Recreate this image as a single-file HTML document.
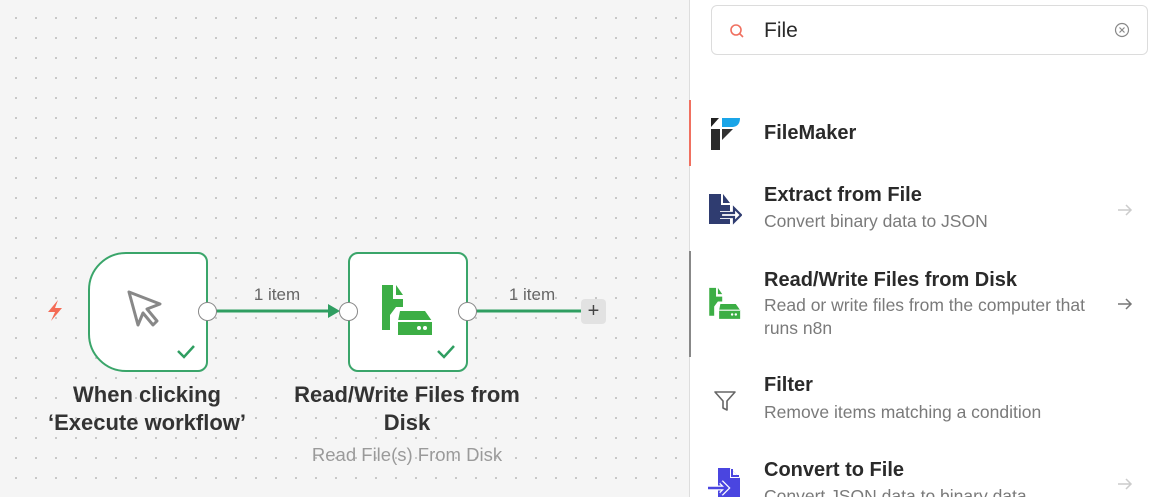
<!DOCTYPE html>
<html><head><style>
*{margin:0;padding:0;box-sizing:border-box}
html,body{width:1161px;height:497px;overflow:hidden}
body{position:relative;font-family:"Liberation Sans",sans-serif;background:#f5f5f5}
.canvas{position:absolute;left:0;top:0;width:689px;height:497px;background-color:#f5f5f5;background-image:radial-gradient(circle,#c4c4c4 1px,transparent 1.2px);background-size:20px 20px;background-position:6px 8px}
.node{position:absolute;top:252px;width:120px;height:120px;background:#fff;border:2px solid #3aa56a;border-radius:10px}
.h{position:absolute;width:19px;height:19px;border-radius:50%;background:#fff;border:1.5px solid #888;top:302px}
.lbl{position:absolute;text-align:center;font-size:22px;font-weight:600;color:#333;line-height:28px;white-space:nowrap}
.panel{position:absolute;left:689px;top:0;width:472px;height:497px;background:#fff;border-left:1px solid #ddd}
.item{position:absolute;left:764px;white-space:nowrap}
.t{font-size:20px;font-weight:600;color:#2a2a2a}
.s{font-size:17.5px;color:#7a7a7a;line-height:23px}
.arr{position:absolute;left:1117px}
</style></head><body>
<div class="canvas"></div>
<svg style="position:absolute;left:0;top:0" width="689" height="497">
<line x1="216" y1="311" x2="332" y2="311" stroke="#2f9e61" stroke-width="3"/>
<polygon points="328,304 340,311 328,318" fill="#2f9e61"/>
<line x1="476" y1="311" x2="582" y2="311" stroke="#2f9e61" stroke-width="3"/>
<path d="M58 300 L48 312 L55 312 L51 321 L62 308 L55 308 Z" fill="#f46b55"/>
<text x="277" y="300" text-anchor="middle" font-size="17" fill="#666" font-family="Liberation Sans">1 item</text>
<text x="532" y="300" text-anchor="middle" font-size="17" fill="#666" font-family="Liberation Sans">1 item</text>
</svg>
<div class="node" style="left:88px;border-radius:38px 10px 10px 38px"></div>
<div class="node" style="left:348px"></div>
<svg style="position:absolute;left:120px;top:285px" width="52" height="52" viewBox="0 0 52 52"><path d="M9 7 L40 19 L27 24 L37 36 L33 40 L23 28 L18 40 Z" fill="none" stroke="#888" stroke-width="3" stroke-linejoin="round"/></svg>
<svg style="position:absolute;left:176px;top:343px" width="20" height="16"><path d="M2 8 L8 14 L18 3" fill="none" stroke="#2f9e61" stroke-width="2.5"/></svg>
<svg style="position:absolute;left:436px;top:343px" width="20" height="16"><path d="M2 8 L8 14 L18 3" fill="none" stroke="#2f9e61" stroke-width="2.5"/></svg>
<svg style="position:absolute;left:380px;top:285px" width="55" height="52" viewBox="0 0 55 52"><path d="M2 0 H13 V14 H23 V22 H16 L10 30 V45 H2 Z" fill="#3cae45"/><path d="M16 0 L23 10 H16 Z" fill="#3cae45"/><path d="M20 26 H45 L52 36 V50 H18 V36 Z" fill="#3cae45"/><line x1="18" y1="36" x2="52" y2="36" stroke="#fff" stroke-width="2"/><circle cx="39" cy="43" r="2" fill="#fff"/><circle cx="45" cy="43" r="2" fill="#fff"/></svg>
<div class="h" style="left:198px"></div>
<div class="h" style="left:339px"></div>
<div class="h" style="left:458px"></div>
<div style="position:absolute;left:581px;top:299px;width:25px;height:25px;background:#e2e2e2;border-radius:4px;text-align:center;font-size:20px;line-height:24px;color:#444">+</div>
<div class="lbl" style="left:27px;width:240px;top:381px">When clicking<br>‘Execute workflow’</div>
<div class="lbl" style="left:287px;width:240px;top:381px">Read/Write Files from<br>Disk</div>
<div style="position:absolute;left:257px;width:300px;top:444px;text-align:center;font-size:18.5px;color:#9a9a9a">Read File(s) From Disk</div>
<div class="panel"></div>
<div style="position:absolute;left:711px;top:5px;width:437px;height:50px;border:1px solid #dcdcdc;border-radius:6px;background:#fff"></div>
<svg style="position:absolute;left:729px;top:23px" width="16" height="16"><circle cx="7" cy="7" r="5" fill="none" stroke="#f07060" stroke-width="1.6"/><line x1="10.5" y1="10.5" x2="14" y2="14" stroke="#f07060" stroke-width="1.6"/></svg>
<div style="position:absolute;left:764px;top:19px;font-size:21px;color:#2a2a2a">File</div>
<svg style="position:absolute;left:1114px;top:22px" width="16" height="16"><circle cx="8" cy="8" r="6.5" fill="none" stroke="#888" stroke-width="1.2"/><path d="M5.5 5.5 L10.5 10.5 M10.5 5.5 L5.5 10.5" stroke="#888" stroke-width="1.2"/></svg>
<div style="position:absolute;left:689px;top:100px;width:2px;height:66px;background:#f07060"></div>
<div style="position:absolute;left:689px;top:251px;width:2px;height:106px;background:#888"></div>
<svg style="position:absolute;left:709px;top:116px" width="32" height="34" viewBox="0 0 32 34"><path d="M2 2 H10 L2 11 Z" fill="#222"/><path d="M13 2 H31 Q31 10 24 11 H13 Z" fill="#1aa5e8"/><path d="M2 13 H11 V34 H2 Z" fill="#2a2a2a"/><path d="M13 13 H24 L13 24 Z" fill="#333"/></svg>
<div class="item t" style="top:122px">FileMaker</div>
<svg style="position:absolute;left:708px;top:193px" width="34" height="32" viewBox="0 0 34 32"><path d="M1 1 H13 V12 H22 V18 H12 V26 H22 V31 H1 Z" fill="#2f3c70"/><path d="M15 1 L22 10 H15 Z" fill="#2f3c70"/><path d="M13 20 H26 V15 L33 22 L26 29 V24 H13 Z" fill="none" stroke="#2f3c70" stroke-width="2.2"/></svg>
<div class="item t" style="top:184px">Extract from File</div>
<div class="item s" style="top:210px">Convert binary data to JSON</div>
<svg class="arr" style="top:202px" width="16" height="16"><path d="M1 8 H14 M9 3 L14 8 L9 13" fill="none" stroke="#ccc" stroke-width="1.5"/></svg>
<svg style="position:absolute;left:708px;top:287px" width="34" height="34" viewBox="0 0 55 52"><path d="M2 0 H13 V14 H23 V22 H16 L10 30 V45 H2 Z" fill="#3cae45"/><path d="M16 0 L23 10 H16 Z" fill="#3cae45"/><path d="M20 26 H45 L52 36 V50 H18 V36 Z" fill="#3cae45"/><line x1="18" y1="36" x2="52" y2="36" stroke="#fff" stroke-width="2"/><circle cx="39" cy="43" r="2" fill="#fff"/><circle cx="45" cy="43" r="2" fill="#fff"/></svg>
<div class="item t" style="top:269px">Read/Write Files from Disk</div>
<div class="item s" style="top:294px">Read or write files from the computer that<br>runs n8n</div>
<svg class="arr" style="top:296px" width="16" height="16"><path d="M1 8 H14 M9 3 L14 8 L9 13" fill="none" stroke="#777" stroke-width="1.5"/></svg>
<svg style="position:absolute;left:713px;top:389px" width="24" height="24"><path d="M2 3 H22 L14 12 V21 L10 19 V12 Z" fill="none" stroke="#666" stroke-width="1.6" stroke-linejoin="round"/></svg>
<div class="item t" style="top:374px">Filter</div>
<div class="item s" style="top:401px">Remove items matching a condition</div>
<svg style="position:absolute;left:708px;top:468px" width="34" height="30" viewBox="0 0 34 30"><path d="M10 0 H22 L32 10 V30 H10 Z" fill="#4a45e0"/><path d="M22 0 V10 H32" fill="#fff"/><path d="M24 1 V8 H31" fill="none" stroke="#4a45e0" stroke-width="2"/><path d="M0 20 H18 M13 14 L19 20 L13 26" fill="none" stroke="#fff" stroke-width="5"/><path d="M0 20 H18 M13 14 L19 20 L13 26" fill="none" stroke="#4a45e0" stroke-width="2.5"/></svg>
<div class="item t" style="top:459px">Convert to File</div>
<div class="item s" style="top:485px">Convert JSON data to binary data</div>
<svg class="arr" style="top:476px" width="16" height="16"><path d="M1 8 H14 M9 3 L14 8 L9 13" fill="none" stroke="#ccc" stroke-width="1.5"/></svg>
</body></html>
